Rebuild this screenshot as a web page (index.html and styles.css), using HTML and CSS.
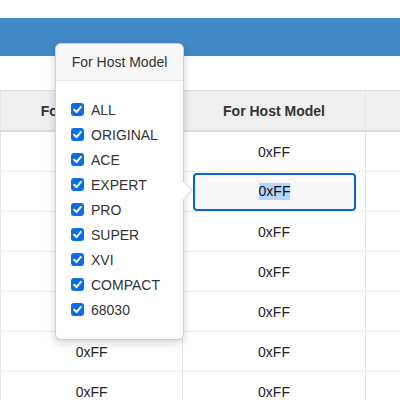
FILE: index.html
```html
<!DOCTYPE html>
<html>
<head>
<meta charset="utf-8">
<link rel="stylesheet" href="styles.css">
</head>
<body>
<div class="topbar"></div>
<div class="grid-wrap">
<table class="grid">
  <thead>
    <tr><th>For Host Model</th><th>For Host Model</th><th></th></tr>
  </thead>
  <tbody>
    <tr><td>0xFF</td><td>0xFF</td><td></td></tr>
    <tr><td>0xFF</td><td class="editing"><div class="editor"><span class="sel">0xFF</span></div></td><td></td></tr>
    <tr><td>0xFF</td><td>0xFF</td><td></td></tr>
    <tr><td>0xFF</td><td>0xFF</td><td></td></tr>
    <tr><td>0xFF</td><td>0xFF</td><td></td></tr>
    <tr><td>0xFF</td><td>0xFF</td><td></td></tr>
    <tr><td>0xFF</td><td>0xFF</td><td></td></tr>
  </tbody>
</table>
</div>
<div class="popover">
  <div class="pop-head">For Host Model</div>
  <ul class="pop-list">
    <li><span class="cb"><svg viewBox="0 0 13 13"><path d="M3.2 6.8 L5.5 9.1 L9.9 3.9" fill="none" stroke="#fff" stroke-width="2" stroke-linecap="round" stroke-linejoin="round"/></svg></span>ALL</li>
    <li><span class="cb"><svg viewBox="0 0 13 13"><path d="M3.2 6.8 L5.5 9.1 L9.9 3.9" fill="none" stroke="#fff" stroke-width="2" stroke-linecap="round" stroke-linejoin="round"/></svg></span>ORIGINAL</li>
    <li><span class="cb"><svg viewBox="0 0 13 13"><path d="M3.2 6.8 L5.5 9.1 L9.9 3.9" fill="none" stroke="#fff" stroke-width="2" stroke-linecap="round" stroke-linejoin="round"/></svg></span>ACE</li>
    <li><span class="cb"><svg viewBox="0 0 13 13"><path d="M3.2 6.8 L5.5 9.1 L9.9 3.9" fill="none" stroke="#fff" stroke-width="2" stroke-linecap="round" stroke-linejoin="round"/></svg></span>EXPERT</li>
    <li><span class="cb"><svg viewBox="0 0 13 13"><path d="M3.2 6.8 L5.5 9.1 L9.9 3.9" fill="none" stroke="#fff" stroke-width="2" stroke-linecap="round" stroke-linejoin="round"/></svg></span>PRO</li>
    <li><span class="cb"><svg viewBox="0 0 13 13"><path d="M3.2 6.8 L5.5 9.1 L9.9 3.9" fill="none" stroke="#fff" stroke-width="2" stroke-linecap="round" stroke-linejoin="round"/></svg></span>SUPER</li>
    <li><span class="cb"><svg viewBox="0 0 13 13"><path d="M3.2 6.8 L5.5 9.1 L9.9 3.9" fill="none" stroke="#fff" stroke-width="2" stroke-linecap="round" stroke-linejoin="round"/></svg></span>XVI</li>
    <li><span class="cb"><svg viewBox="0 0 13 13"><path d="M3.2 6.8 L5.5 9.1 L9.9 3.9" fill="none" stroke="#fff" stroke-width="2" stroke-linecap="round" stroke-linejoin="round"/></svg></span>COMPACT</li>
    <li><span class="cb"><svg viewBox="0 0 13 13"><path d="M3.2 6.8 L5.5 9.1 L9.9 3.9" fill="none" stroke="#fff" stroke-width="2" stroke-linecap="round" stroke-linejoin="round"/></svg></span>68030</li>
  </ul>
</div>
</body>
</html>
```
FILE: styles.css
```css
html, body {
  margin: 0;
  padding: 0;
  width: 400px;
  height: 400px;
  overflow: hidden;
  background: #fff;
  font-family: "Liberation Sans", Arial, sans-serif;
  font-size: 14px;
  color: #222;
}

.topbar {
  margin-top: 18px;
  height: 38px;
  background: #4189c7;
}

.grid-wrap {
  width: 400px;
  overflow: hidden;
}

.grid {
  margin-top: 34px;
  border-collapse: collapse;
  table-layout: fixed;
  width: 548px;
}

.grid th,
.grid td {
  text-align: center;
  padding: 0;
  border-left: 1px solid #e4e4e4;
  border-right: 1px solid #e4e4e4;
}

.grid th {
  height: 39px;
  background: #efefef;
  font-weight: bold;
  color: #333;
  border-top: 1px solid #dedede;
  border-bottom: 2px solid #dcdcdc;
}

.grid td {
  height: 39px;
  border-bottom: 1px solid #ebebeb;
}

.editor {
  margin: 0 9px 0 10px;
  height: 34px;
  border: 2px solid #0b63cc;
  border-radius: 4px;
  background: #f8f8f8;
  display: flex;
  align-items: center;
  justify-content: center;
}

.sel {
  background: #b4d5fe;
  color: #111;
  line-height: 17px;
}

.popover {
  position: absolute;
  left: 55px;
  top: 43px;
  width: 127px;
  height: 295px;
  background: #fff;
  border: 1px solid rgba(0, 0, 0, 0.18);
  border-radius: 6px;
  box-shadow: 0 3px 8px rgba(0, 0, 0, 0.18);
}

.popover::after {
  content: "";
  position: absolute;
  right: -7px;
  top: 139px;
  width: 14px;
  height: 14px;
  background: #fff;
  border-top: 1px solid rgba(0, 0, 0, 0.15);
  border-right: 1px solid rgba(0, 0, 0, 0.15);
  transform: rotate(45deg);
}

.pop-head {
  height: 36px;
  line-height: 36px;
  text-align: center;
  background: #f7f7f7;
  border-bottom: 1px solid #e6e6e6;
  border-radius: 6px 6px 0 0;
  color: #333;
}

.pop-list {
  list-style: none;
  margin: 0;
  padding: 16px 0 0 15px;
}

.pop-list li {
  height: 25px;
  display: flex;
  align-items: center;
  color: #333;
}

.cb {
  width: 13px;
  height: 13px;
  border-radius: 3px;
  background: #0b6ee6;
  margin-right: 7px;
  display: flex;
}

.cb svg {
  width: 13px;
  height: 13px;
}
```
